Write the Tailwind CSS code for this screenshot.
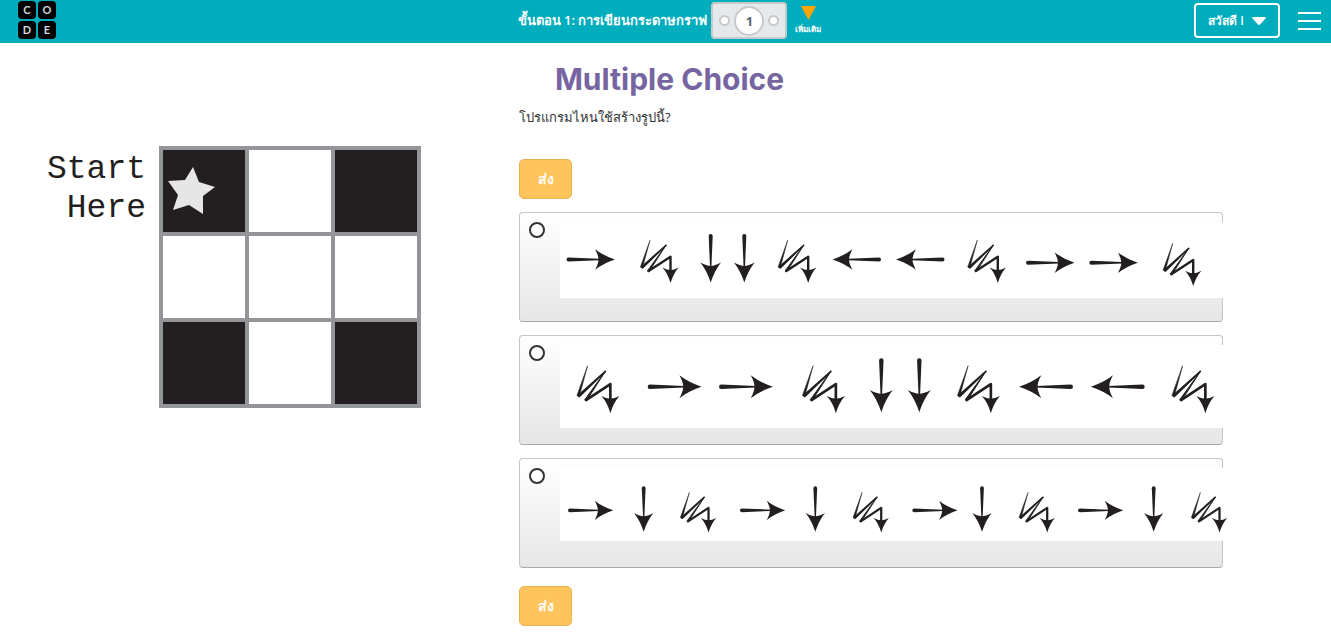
<!doctype html>
<html lang="th">
  <head>
    <title>Multiple Choice</title>
    <meta charset="utf-8" />
    <meta name="viewport" content="width=device-width, initial-scale=1.0" />
    <script src="https://cdn.jsdelivr.net/npm/@tailwindcss/browser@4"></script>
  </head>
  <body class="bg-white min-h-screen font-['Open_Sans','Noto_Sans',sans-serif] text-[13px] text-[#333]">
    <!-- Shared arrow shapes -->
    <svg class="hidden">
      <defs>
        <g id="arrow" fill="#231f20">
          <path d="M2 -2 L33 -0.7 V0.7 L2 2 A2 2 0 0 1 2 -2z" />
          <path d="M28.6 -10.3 Q37 -3.8 48.5 0 Q37 3.8 28.6 10.3 Q32 4 32 0 Q32 -4 28.6 -10.3z" />
        </g>
        <g id="scribble" fill="#231f20" stroke="#231f20" stroke-linejoin="round">
          <path d="M10 0.7 L0.4 27.4 L2.6 28 z" stroke-width="0.5" />
          <path d="M1.4 27.6 L26 5.7 L2.6 28.4z" stroke-width="1.5" />
          <path d="M26 5.7 L7.4 31.4 L9.4 31.6z" stroke-width="0.9" />
          <path d="M8.6 31.6 L30.5 17.2 V32" fill="none" stroke-width="2.4" stroke-linecap="round" />
          <path d="M22.4 28 Q27 30.5 30.5 30.5 Q34 30.5 38.7 28 Q33.4 34 30.5 43.4 Q27.8 34 22.4 28z" stroke="none" />
        </g>
      </defs>
    </svg>

    <!-- Header -->
    <header class="bg-[#00adbc] text-white grid grid-cols-[1fr_auto_1fr] items-center h-[43px] pl-[18px] pr-[10px]">
      <a href="#" aria-label="Code.org" class="grid grid-cols-2 gap-0.5 w-[38px] -mt-1 text-[11px] leading-[18px] font-bold text-center text-gray-300 font-['Lato',sans-serif]">
        <span class="bg-black rounded-sm">C</span>
        <span class="bg-black rounded-sm">O</span>
        <span class="bg-black rounded-sm">D</span>
        <span class="bg-black rounded-sm">E</span>
      </a>

      <div class="flex items-center gap-1 -mt-0.5">
        <a href="#" class="font-semibold whitespace-nowrap">ขั้นตอน 1: การเขียนกระดาษกราฟ</a>
        <div class="flex items-center justify-center gap-1 w-[76px] h-[37px] bg-[#e7e8ea] border-2 border-[#c6cacd] rounded">
          <a href="#" aria-label="Previous" class="shrink-0 size-[11px] bg-white border-2 border-[#c6cacd] rounded-full"></a>
          <a href="#" class="shrink-0 size-[30px] bg-white border-2 border-[#c6cacd] rounded-full text-[#5b6770] font-bold text-center leading-[26px]">1</a>
          <a href="#" aria-label="Next" class="shrink-0 size-[11px] bg-white border-2 border-[#c6cacd] rounded-full"></a>
        </div>
        <button class="flex flex-col items-center gap-0.5 ml-1 text-[8px] leading-[14px] font-semibold">
          <svg class="w-[15px] h-[14px]" viewBox="0 0 15 14"><path d="M0 0 H15 L7.5 14z" fill="#ffa400" /></svg>
          เพิ่มเติม
        </button>
      </div>

      <div class="flex items-center justify-end gap-[18px] -mt-0.5">
        <button class="flex items-center justify-center gap-2 w-[86px] h-[35px] border-2 border-white rounded text-xs font-semibold">
          สวัสดี I
          <svg class="w-[14px] h-2" viewBox="0 0 14 8"><path d="M1 0 H13 Q14.5 0.5 13.5 1.5 L8 7.5 Q7 8.4 6 7.5 L0.5 1.5 Q-0.5 0.5 1 0z" fill="#fff" /></svg>
        </button>
        <button aria-label="Menu" class="flex flex-col gap-1.5 w-[23px]">
          <span class="h-0.5 w-full bg-white"></span>
          <span class="h-0.5 w-full bg-white"></span>
          <span class="h-0.5 w-full bg-white"></span>
        </button>
      </div>
    </header>

    <h1 class="pl-2 pt-4 text-center text-[30px] leading-10 font-bold text-[#7665a0] font-['Inter',sans-serif]">Multiple Choice</h1>

    <main class="grid grid-cols-[474px_1fr] pl-[45px] pr-[108px]">
      <!-- Pattern to build -->
      <div class="flex items-start gap-[13px] pt-[47px]">
        <p class="w-[101px] text-right text-[33px] leading-[39px] text-[#231f20] pt-1 font-['Liberation_Mono',monospace]">Start Here</p>
        <div class="grid grid-cols-3 gap-1 p-1 w-[262px] bg-[#949599]">
          <div class="aspect-square bg-[#231f20]">
            <svg class="w-full" viewBox="0 0 82 82"><path d="M30 17 L36 32 L52 37 L40 46 L40 64 L26 55 L10 60 L15 45 L5 31 L22 30z" fill="#e6e6e6" /></svg>
          </div>
          <div class="aspect-square bg-white"></div>
          <div class="aspect-square bg-[#231f20]"></div>
          <div class="aspect-square bg-white"></div>
          <div class="aspect-square bg-white"></div>
          <div class="aspect-square bg-white"></div>
          <div class="aspect-square bg-[#231f20]"></div>
          <div class="aspect-square bg-white"></div>
          <div class="aspect-square bg-[#231f20]"></div>
        </div>
      </div>

      <!-- Question and answers -->
      <form class="flex flex-col items-start pt-2">
        <p class="leading-5">โปรแกรมไหนใช้สร้างรูปนี้?</p>
        <button type="button" class="mt-8 w-[53px] h-10 bg-[#ffc45c] border border-[#e8b254] rounded-[5px] text-white text-sm font-semibold">ส่ง</button>

        <div class="flex flex-col gap-[13px] w-full mt-[13px] mb-[18px]">
          <label class="flex items-start gap-[15px] min-h-[110px] pl-[9px] pt-[9px] border border-[#c5c5c5] border-b-[#a9a9a9] rounded bg-linear-to-b from-white to-[#e6e6e6]">
            <input type="radio" name="answer" aria-label="A" class="appearance-none shrink-0 size-4 bg-white border-2 border-[#333] rounded-full checked:bg-[#333]" />
            <svg class="flex-1 min-w-0 -mr-px bg-white overflow-visible" viewBox="0 0 663 76">
              <use href="#arrow" transform="translate(6.5 37.5)" />
              <use href="#scribble" transform="translate(80 17.5)" />
              <use href="#arrow" transform="translate(150.7 12) rotate(90)" />
              <use href="#arrow" transform="translate(184.3 12) rotate(90)" />
              <use href="#scribble" transform="translate(217.7 17.5)" />
              <use href="#arrow" transform="translate(321 37.5) rotate(180)" />
              <use href="#arrow" transform="translate(384.5 37.5) rotate(180)" />
              <use href="#scribble" transform="translate(407.3 17.5)" />
              <use href="#arrow" transform="translate(466 40.7)" />
              <use href="#arrow" transform="translate(529.3 40.7)" />
              <use href="#scribble" transform="translate(602.7 20.7)" />
            </svg>
          </label>

          <label class="flex items-start gap-[15px] min-h-[110px] pl-[9px] pt-[9px] border border-[#c5c5c5] border-b-[#a9a9a9] rounded bg-linear-to-b from-white to-[#e6e6e6]">
            <input type="radio" name="answer" aria-label="B" class="appearance-none shrink-0 size-4 bg-white border-2 border-[#333] rounded-full checked:bg-[#333]" />
            <svg class="flex-1 min-w-0 -mr-px bg-white overflow-visible" viewBox="0 0 663 83">
              <use href="#scribble" transform="translate(16.5 20) scale(1.11)" />
              <use href="#arrow" transform="translate(87.7 41.7) scale(1.11)" />
              <use href="#arrow" transform="translate(159 41.7) scale(1.11)" />
              <use href="#scribble" transform="translate(242 20) scale(1.11)" />
              <use href="#arrow" transform="translate(321.3 13.3) rotate(90) scale(1.11)" />
              <use href="#arrow" transform="translate(359.3 13.3) rotate(90) scale(1.11)" />
              <use href="#scribble" transform="translate(397 20) scale(1.11)" />
              <use href="#arrow" transform="translate(513 41.7) rotate(180) scale(1.11)" />
              <use href="#arrow" transform="translate(584.7 41.7) rotate(180) scale(1.11)" />
              <use href="#scribble" transform="translate(611.5 20) scale(1.11)" />
            </svg>
          </label>

          <label class="flex items-start gap-[15px] min-h-[110px] pl-[9px] pt-[9px] border border-[#c5c5c5] border-b-[#a9a9a9] rounded bg-linear-to-b from-white to-[#e6e6e6]">
            <input type="radio" name="answer" aria-label="C" class="appearance-none shrink-0 size-4 bg-white border-2 border-[#333] rounded-full checked:bg-[#333]" />
            <svg class="flex-1 min-w-0 -mr-px bg-white overflow-visible" viewBox="0 0 663 73">
              <use href="#arrow" transform="translate(8 42.3) scale(.935)" />
              <use href="#arrow" transform="translate(83.7 18.3) rotate(90) scale(.935)" />
              <use href="#scribble" transform="translate(120 23.8) scale(.935)" />
              <use href="#arrow" transform="translate(180 42.3) scale(.935)" />
              <use href="#arrow" transform="translate(255.3 18.3) rotate(90) scale(.935)" />
              <use href="#scribble" transform="translate(292.7 23.8) scale(.935)" />
              <use href="#arrow" transform="translate(352.3 42.3) scale(.935)" />
              <use href="#arrow" transform="translate(422 18.3) rotate(90) scale(.935)" />
              <use href="#scribble" transform="translate(458.7 23.8) scale(.935)" />
              <use href="#arrow" transform="translate(518 42.3) scale(.935)" />
              <use href="#arrow" transform="translate(593.7 18.3) rotate(90) scale(.935)" />
              <use href="#scribble" transform="translate(631 23.8) scale(.935)" />
            </svg>
          </label>
        </div>

        <button type="button" class="w-[53px] h-10 bg-[#ffc45c] border border-[#e8b254] rounded-[5px] text-white text-sm font-semibold">ส่ง</button>
      </form>
    </main>
  </body>
</html>
